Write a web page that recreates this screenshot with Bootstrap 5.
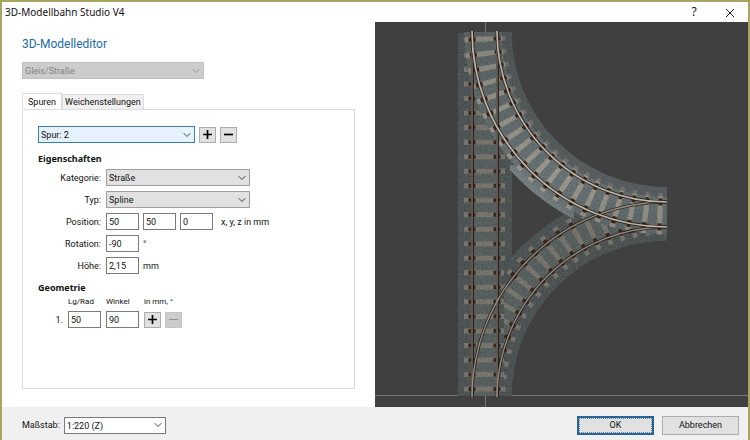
<!DOCTYPE html>
<html lang="de">
<head>
<meta charset="utf-8">
<meta name="viewport" content="width=device-width, initial-scale=1">
<title>3D-Modellbahn Studio V4</title>
<link href="https://cdn.jsdelivr.net/npm/bootstrap@5.3.0/dist/css/bootstrap.min.css" rel="stylesheet">
<style>
:root { --ui: Roboto, "Noto Sans", sans-serif; --wide: "Noto Sans", "Open Sans", sans-serif; }
body { font: 9px/14px var(--ui); color: #111; background: #a8a55f; min-height: 100vh; padding: 2px 2px 0 2px; }
.dialog { min-height: calc(100vh - 2px); background: #fff; }
.titlebar { height: 20px; font-family: var(--wide); font-size: 10px; padding: 0 0 0 3px; }
.titlebar button { width: 36px; height: 20px; border: 0; background: none; padding: 0; color: #111; font-size: 12px; line-height: 18px; }
.editor { flex: 0 0 50%; padding: 14px 20px 18px 20px; }
.editor h1 { font-size: 12px; line-height: 16px; color: #1f6aa5; margin: 0 0 10px; font-weight: 400; }
.field, .pick { height: 17px; border: 1px solid #7a7a7a; background: #fff; color: #111; font: 9px/15px var(--ui); padding: 0 3px; border-radius: 0; }
.field { width: 33px; padding: 0 2px; }
.pick { appearance: none; padding: 1px 16px 0 2px; line-height: 14px; background: #e1e1e1 url("data:image/svg+xml,%3Csvg xmlns='http://www.w3.org/2000/svg' width='8' height='6' viewBox='0 0 8 6'%3E%3Cpath d='M.7 1.2 4 4.5 7.3 1.2' fill='none' stroke='%23444'/%3E%3C/svg%3E") no-repeat right 3px center; border-color: #a0a0a0; }
.pick:disabled { background-color: #ccc; background-image: url("data:image/svg+xml,%3Csvg xmlns='http://www.w3.org/2000/svg' width='8' height='6' viewBox='0 0 8 6'%3E%3Cpath d='M.7 1.2 4 4.5 7.3 1.2' fill='none' stroke='%23999'/%3E%3C/svg%3E"); border-color: #bfbfbf; color: #838383; opacity: 1; }
.pick-kind { width: 182px; }
.pick-track { width: 157px; background-color: #e5f1fb; border-color: #3c7fa5; }
.pick-prop { width: 144px; }
.pick-scale { width: 102px; background-color: #fff; border-color: #7a7a7a; }
.sq { width: 17px; height: 16px; border: 1px solid #adadad; background: #e1e1e1; padding: 0; display: grid; place-items: center; color: #000; }
.sq:disabled { background: #ccc; border-color: #c4c4c4; color: #929292; }
.tabs { margin-top: 14px; }
.tabs button { border: 1px solid #dcdcdc; border-bottom: 0; background: #f0f0f0; font: 9px/14px var(--ui); padding: 0 2px; height: 15px; color: #111; }
.tabs button.current { background: #fff; height: 17px; padding: 0 5px; margin-bottom: -1px; }
.sheet { border: 1px solid #dcdcdc; padding: 16px 15px; }
.sheet h2 { font: 700 9px/16px var(--wide); margin: 0; }
.props { display: grid; grid-template-columns: 63px 1fr; grid-auto-rows: 17px; gap: 5px; align-items: center; margin: 2px 0 6px; }
.props > label { text-align: right; }
.geo { display: grid; grid-template-columns: 25px 33px 33px 1fr; column-gap: 5px; row-gap: 3px; align-items: center; }
.geo .cap { font-size: 8px; line-height: 12px; }
.stage { background: #404040; min-width: 0; }
.stage svg { position: absolute; inset: 0; width: 100%; height: 100%; }
.actions { background: #f0f0f0; height: 33px; padding: 3px 9px 0 20px; }
.actions .push { width: 77px; height: 19px; border: 1px solid #adadad; background: #e1e1e1; padding: 0; font: 9px/15px var(--ui); color: #111; }
.actions .push.main { border: 2px solid #2a6496; outline: 1px dotted #5a88ad; outline-offset: -3px; }
</style>
<script src="https://cdn.jsdelivr.net/npm/bootstrap@5.3.0/dist/js/bootstrap.bundle.min.js" defer></script>
</head>
<body>
<div class="dialog d-flex flex-column">
  <header class="titlebar d-flex align-items-center">
    <span class="me-auto">3D-Modellbahn Studio V4</span>
    <button type="button" aria-label="Hilfe">?</button>
    <button type="button" aria-label="Schließen"><svg width="10" height="10" viewBox="0 0 10 10"><path d="M1 1 9 9M9 1 1 9" stroke="#222" fill="none"/></svg></button>
  </header>
  <div class="d-flex flex-grow-1">
    <main class="editor d-flex flex-column">
      <h1>3D-Modelleditor</h1>
      <select class="pick pick-kind" aria-label="Modellart" disabled><option>Gleis/Straße</option></select>
      <div class="tabs d-flex align-items-end" role="tablist">
        <button type="button" class="current" role="tab" aria-selected="true">Spuren</button>
        <button type="button" role="tab" aria-selected="false">Weichenstellungen</button>
      </div>
      <section class="sheet flex-grow-1">
        <div class="d-flex align-items-center mb-2">
          <select class="pick pick-track me-1" aria-label="Spur"><option>Spur: 2</option></select>
          <button type="button" class="sq me-1" aria-label="Spur hinzufügen"><svg width="9" height="9" viewBox="0 0 9 9"><path d="M0 4.5h9M4.5 0v9" stroke="currentColor" stroke-width="1.7"/></svg></button>
          <button type="button" class="sq" aria-label="Spur entfernen"><svg width="9" height="9" viewBox="0 0 9 9"><path d="M0 4.5h9" stroke="currentColor" stroke-width="1.7"/></svg></button>
        </div>
        <h2>Eigenschaften</h2>
        <div class="props">
          <label for="kat">Kategorie:</label><select id="kat" class="pick pick-prop"><option>Straße</option></select>
          <label for="typ">Typ:</label><select id="typ" class="pick pick-prop"><option>Spline</option></select>
          <label for="px">Position:</label>
          <div class="d-flex align-items-center"><input id="px" class="field" value="50"><input class="field mx-1" aria-label="y" value="50"><input class="field" aria-label="z" value="0"><span class="ms-2">x, y, z in mm</span></div>
          <label for="rot">Rotation:</label><div class="d-flex align-items-center gap-1"><input id="rot" class="field" value="-90"><span>°</span></div>
          <label for="hoe">Höhe:</label><div class="d-flex align-items-center gap-1"><input id="hoe" class="field" value="2,15"><span>mm</span></div>
        </div>
        <h2>Geometrie</h2>
        <div class="geo">
          <span></span><label class="cap" for="rad">Lg/Rad</label><label class="cap" for="win">Winkel</label><span class="cap">in mm, °</span>
          <span class="text-end">1.</span><input id="rad" class="field" value="50"><input id="win" class="field" value="90">
          <div class="d-flex gap-1">
            <button type="button" class="sq" aria-label="Abschnitt hinzufügen"><svg width="9" height="9" viewBox="0 0 9 9"><path d="M0 4.5h9M4.5 0v9" stroke="currentColor" stroke-width="1.7"/></svg></button>
            <button type="button" class="sq" aria-label="Abschnitt entfernen" disabled><svg width="9" height="9" viewBox="0 0 9 9"><path d="M0 4.5h9" stroke="currentColor"/></svg></button>
          </div>
        </div>
      </section>
    </main>
    <div class="stage flex-grow-1 position-relative">
      <svg viewBox="375 22 373 385" preserveAspectRatio="xMidYMid slice" role="img" aria-label="Gleisdreieck">
        <defs>
          <filter id="grain" x="458" y="32" width="210" height="365" filterUnits="userSpaceOnUse" color-interpolation-filters="sRGB">
            <feTurbulence type="fractalNoise" baseFrequency=".5" numOctaves="2" seed="4" result="n"/>
            <feColorMatrix in="n" type="matrix" values="1 0 0 0 0  1 0 0 0 0  1 0 0 0 0  0 0 0 0 1" result="g"/>
            <feComposite in="SourceGraphic" in2="g" operator="arithmetic" k2="1" k3=".13" k4="-.065" result="s"/>
            <feComposite in="s" in2="SourceGraphic" operator="in"/>
          </filter>
          <linearGradient id="bed" gradientUnits="userSpaceOnUse" x1="0" y1="32" x2="0" y2="241">
            <stop offset="0" stop-color="#565e5e"/><stop offset=".4" stop-color="#5f6869"/><stop offset=".7" stop-color="#677173"/><stop offset="1" stop-color="#596162"/>
          </linearGradient>
          <linearGradient id="tie" gradientUnits="userSpaceOnUse" x1="0" y1="32" x2="0" y2="241">
            <stop offset="0" stop-color="#85837b"/><stop offset=".7" stop-color="#97948a"/><stop offset="1" stop-color="#87847b"/>
          </linearGradient>
          <radialGradient id="edge" gradientUnits="userSpaceOnUse" cx="667" cy="32" r="209">
            <stop offset=".94" stop-color="#fff" stop-opacity="0"/><stop offset="1" stop-color="#fff" stop-opacity=".12"/>
          </radialGradient>
          <clipPath id="openside"><path d="M510 165H574V242H510Z"/></clipPath>
          <clipPath id="lowerside"><path d="M504 200H668V397H504Z"/></clipPath>
        </defs>
        <path d="M375 395.5H748M485.500 22V407" stroke="#777" fill="none"/>
        <g fill="none">
          <!-- straight track bed -->
          <g filter="url(#grain)">
            <path d="M485 33V396" stroke="#4d5252" stroke-width="54"/>
            <path d="M484.500 33V396" stroke="#565e5e" stroke-width="24"/>
            <path d="M484.500 33V396" stroke="#75736c" stroke-width="41" stroke-dasharray="5 9.520" stroke-dashoffset="-5"/>
          </g>
          <path d="M472 33V396M497 33V396" stroke="#38261d" stroke-width="7" stroke-dasharray="4 10.520" stroke-dashoffset="-5.500"/>
          <!-- lower curve bed -->
          <g clip-path="url(#lowerside)">
            <g filter="url(#grain)">
              <path d="M485 396A182 182 0 0 1 667 214" stroke="#4d5252" stroke-width="54"/>
              <path d="M485 396A182 182 0 0 1 667 214" stroke="#565e5e" stroke-width="24"/>
              <path d="M485 396A182 182 0 0 1 667 214" stroke="#75736c" stroke-width="41" pathLength="200" stroke-dasharray="3.500 6.500" stroke-dashoffset="-3.250"/>
            </g>
            <g stroke="#38261d" stroke-width="7">
              <path pathLength="200" d="M497 396A170 170 0 0 1 667 226" stroke-dasharray="3 7" stroke-dashoffset="-3.500"/>
              <path pathLength="200" d="M472 396A195 195 0 0 1 667 201" stroke-dasharray="0 83.500 3 7 3 7 3 7 3 7 3 7 3 200"/>
            </g>
          </g>
          <!-- upper curve bed -->
          <g filter="url(#grain)">
            <path d="M485 32A182 182 0 0 0 667 214" stroke="url(#bed)" stroke-width="54" clip-path="url(#openside)"/>
            <path d="M488 32A179 179 0 0 0 667 211" stroke="url(#bed)" stroke-width="48"/>
            <path d="M485 32A182 182 0 0 0 667 214" stroke="url(#tie)" stroke-width="41" pathLength="200" stroke-dasharray="3.500 6.500" stroke-dashoffset="-3.250"/>
          </g>
          <path d="M485 32A182 182 0 0 0 667 214" stroke="url(#edge)" stroke-width="54" clip-path="url(#openside)"/>
          <path d="M507 32A160 160 0 0 0 667 192" stroke="#404040" stroke-opacity=".4" stroke-width="10"/>
          <g stroke="#38261d" stroke-width="7" stroke-dasharray="3 7" stroke-dashoffset="-3.500">
            <path pathLength="200" d="M472 32A195 195 0 0 0 667 227"/>
            <path pathLength="200" d="M497 32A170 170 0 0 0 667 202"/>
          </g>
          <!-- rails -->
          <g stroke="#25211e" stroke-width="3">
            <path d="M472.500 31V397M497.500 31V397"/>
            <path d="M472 397A195 195 0 0 1 667 202M497 397A170 170 0 0 1 667 227"/>
          </g>
          <path d="M472 31V397M497 31V397" stroke="#81776e" stroke-width="1.300"/>
          <path d="M472 397A195 195 0 0 1 667 202M497 397A170 170 0 0 1 667 227" stroke="#978b7e" stroke-width="1.400"/>
          <path d="M472 31A195 196 0 0 0 667 227M497 31A170 171 0 0 0 667 202" stroke="#25211e" stroke-width="3.200"/>
          <path d="M472 31A195 196 0 0 0 667 227M497 31A170 171 0 0 0 667 202" stroke="#c3b5a5" stroke-width="1.700"/>
        </g>
      </svg>
    </div>
  </div>
  <footer class="actions d-flex align-items-center">
    <label for="scale" class="me-1">Maßstab:</label>
    <select id="scale" class="pick pick-scale me-auto"><option>1:220 (Z)</option></select>
    <button type="button" class="push main me-2">OK</button>
    <button type="button" class="push">Abbrechen</button>
  </footer>
</div>
</body>
</html>
